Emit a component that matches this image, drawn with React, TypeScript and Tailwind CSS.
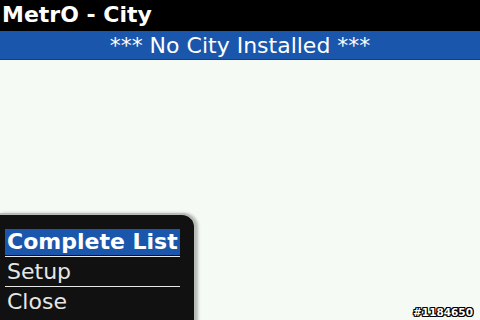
import React from "react";

export default function App() {
  const font = { fontFamily: '"DejaVu Sans", sans-serif' };
  return (
    <div className="relative w-[480px] h-[320px] overflow-hidden bg-[#f5faf5]" style={font}>
      <div className="h-[31px] bg-black text-white font-bold text-[22px] leading-[29px] pl-[2px]">MetrO - City</div>
      <div className="h-[29px] bg-[#1a56ac] text-white text-[22px] leading-[30px] text-center border-b border-[#2a3a5a]">*** No City Installed ***</div>
      <div className="absolute left-0 top-[213px] w-[196px] h-[120px] bg-[#111111] rounded-tr-[14px] border-t-2 border-r-2 border-[#b8bcb8] pt-[14px] pl-[5px] pr-[14px] shadow-[2px_0_3px_rgba(0,0,0,0.25)]">
        <div className="h-[28px] pb-[1px] border-b border-[#e8e8e8]">
          <div className="h-[26px] bg-[#1a56ac] text-white font-bold text-[22px] leading-[26px] pl-[2px]">Complete List</div>
        </div>
        <div className="h-[30px] border-b border-[#e8e8e8] text-[#e6e6e6] text-[22px] leading-[29px] pl-[2px]">Setup</div>
        <div className="h-[30px] text-[#e6e6e6] text-[22px] leading-[30px] pl-[2px]">Close</div>
      </div>
      <div
        className="absolute right-[7px] bottom-[2px] text-white font-bold text-[10.5px] leading-[12px]"
        style={{ textShadow: "1px 0 0 #000, -1px 0 0 #000, 0 1px 0 #000, 0 -1px 0 #000, 1px 1px 0 #000, -1px -1px 0 #000, 1px -1px 0 #000, -1px 1px 0 #000" }}
      >
        #1184650
      </div>
    </div>
  );
}
